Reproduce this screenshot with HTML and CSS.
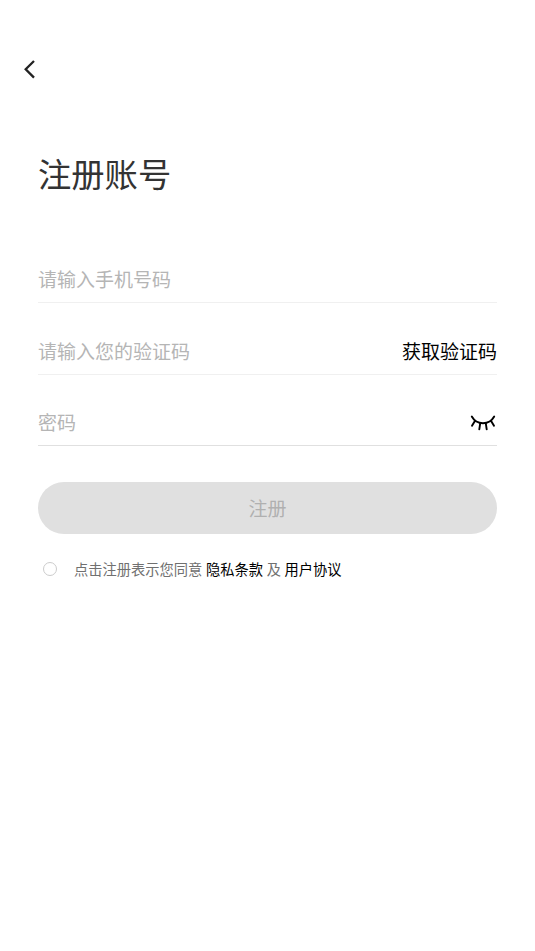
FILE: index.html
```html
<!DOCTYPE html>
<html lang="zh-CN">
<head>
<meta charset="utf-8">
<title>注册账号</title>
<link rel="stylesheet" href="styles.css">
</head>
<body>
<main class="page">
  <header class="topbar">
    <svg class="back" viewBox="0 0 14 20" aria-hidden="true"><path d="M12 2 3.700 10.300l8.300 8.300"/></svg>
  </header>
  <h1 class="title">注册账号</h1>
  <form class="form">
    <div class="field"><span class="hint">请输入手机号码</span></div>
    <div class="field"><span class="hint">请输入您的验证码</span><span class="code">获取验证码</span></div>
    <div class="field field-last"><span class="hint">密码</span>
      <svg class="eye" viewBox="0 0 26 16" aria-hidden="true"><path d="M1.800 1.500C4.200 5.900 8 8.200 13 8.200S21.800 5.900 24.200 1.500M4.900 5.900 2 10.800M10.200 8.300 9.300 14.300M15.800 8.300l.9 6M21.100 5.900l2.900 4.900"/></svg>
    </div>
    <div class="submit">注册</div>
    <div class="agree"><span class="radio"></span><span class="terms">点击注册表示您同意 <b>隐私条款</b> 及 <b>用户协议</b></span></div>
  </form>
</main>
</body>
</html>
```
FILE: styles.css
```css
* { box-sizing: border-box; }
body { margin: 0; background: #fff; font-family: "Noto Sans CJK SC", sans-serif; font-weight: 400; }
.page { padding: 0 38px; height: 951px; }
.topbar { height: 138px; padding-top: 59px; margin-left: -16px; }
.back { display: block; width: 14px; height: 20px; fill: none; stroke: #222; stroke-width: 2.300; }
.title { margin: 0; height: 70px; line-height: 70px; font-size: 33.300px; font-weight: 400; color: #333; }
.form { padding-top: 23px; }
.field { display: flex; align-items: flex-end; justify-content: space-between; height: 72px; padding-bottom: 9px; border-bottom: 1px solid #f0f0f0; font-size: 19px; line-height: 28px; }
.field-last { height: 71px; border-color: #e0e0e0; }
.hint { color: #b5b5b5; }
.code { color: #000; }
.eye { width: 26px; height: 16px; margin: 0 1px 5px 0; fill: none; stroke: #000; stroke-width: 1.900; stroke-linecap: round; }
.submit { height: 52px; margin-top: 36px; border-radius: 26px; background: #e0e0e0; color: #b0b0b0; font-size: 19px; line-height: 51px; text-align: center; }
.agree { display: flex; align-items: center; height: 24px; margin-top: 23px; padding-left: 5px; font-size: 14.250px; color: #707070; }
.radio { width: 14px; height: 14px; margin-right: 17px; border: 1px solid #ccc; border-radius: 50%; }
.terms { padding-bottom: 2px; word-spacing: 0.5px; }
.terms b { font-weight: 400; color: #000; }
```
